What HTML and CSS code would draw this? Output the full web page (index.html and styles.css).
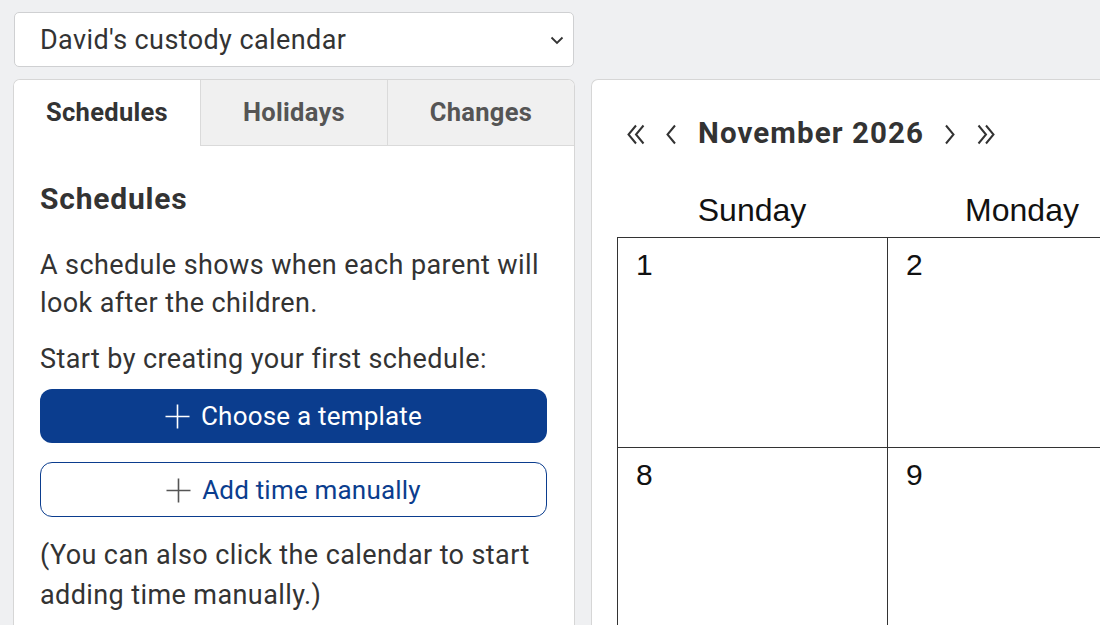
FILE: index.html
```html
<!DOCTYPE html>
<html>
<head>
<meta charset="utf-8">
<link rel="stylesheet" href="styles.css">
</head>
<body>
<div class="page">
  <div class="left">
    <div class="select">
      <span>David's custody calendar</span>
      <svg class="chev" width="14" height="9" viewBox="0 0 14 9"><path d="M1.5 1.5 L7 7 L12.5 1.5" fill="none" stroke="#333" stroke-width="1.8"/></svg>
    </div>
    <div class="panel">
      <div class="tabs">
        <div class="tab active">Schedules</div>
        <div class="tab">Holidays</div>
        <div class="tab">Changes</div>
      </div>
      <div class="content">
        <h2 class="heading">Schedules</h2>
        <p class="para">A schedule shows when each parent will look after the children.</p>
        <p class="para start">Start by creating your first schedule:</p>
        <div class="btn primary"><svg class="plus" width="25" height="25" viewBox="0 0 25 25"><path d="M12.5 0.5 V24.5 M0.5 12.5 H24.5" stroke="currentColor" stroke-width="1.6"/></svg>Choose a template</div>
        <div class="btn outline"><svg class="plus" width="25" height="25" viewBox="0 0 25 25"><path d="M12.5 0.5 V24.5 M0.5 12.5 H24.5" stroke="#555" stroke-width="1.6"/></svg>Add time manually</div>
        <p class="para note">(You can also click the calendar to start adding time manually.)</p>
      </div>
    </div>
  </div>
  <div class="right">
    <div class="nav">
      <svg class="arrow first" width="20" height="21" viewBox="0 0 20 21"><path d="M10 1.5 L2.5 10.5 L10 19.5 M17.5 1.5 L10 10.5 L17.5 19.5" fill="none" stroke="#333" stroke-width="2"/></svg>
      <svg class="arrow prev" width="12" height="21" viewBox="0 0 12 21"><path d="M10 1.5 L2.5 10.5 L10 19.5" fill="none" stroke="#333" stroke-width="2"/></svg>
      <span class="month">November 2026</span>
      <svg class="arrow next" width="12" height="21" viewBox="0 0 12 21"><path d="M2 1.5 L9.5 10.5 L2 19.5" fill="none" stroke="#333" stroke-width="2"/></svg>
      <svg class="arrow last" width="20" height="21" viewBox="0 0 20 21"><path d="M2.5 1.5 L10 10.5 L2.5 19.5 M10 1.5 L17.5 10.5 L10 19.5" fill="none" stroke="#333" stroke-width="2"/></svg>
    </div>
    <div class="days">
      <div class="dayname">Sunday</div>
      <div class="dayname">Monday</div>
    </div>
    <div class="grid">
      <div class="cell">1</div>
      <div class="cell">2</div>
      <div class="cell">8</div>
      <div class="cell">9</div>
    </div>
  </div>
</div>
</body>
</html>
```

FILE: styles.css
```css
html, body {
  margin: 0;
  padding: 0;
  background: #eff0f2;
  height: 100%;
  overflow: hidden;
}
body {
  font-family: Roboto, "Liberation Sans", sans-serif;
  color: #333;
}
.page {
  display: flex;
  gap: 17px;
  padding: 12px 0 0 14px;
  align-items: flex-start;
}
.left {
  width: 560px;
  flex: none;
}
.select {
  height: 53px;
  background: #fff;
  border: 1px solid #cfd0d2;
  border-radius: 5px;
  display: flex;
  align-items: center;
  justify-content: space-between;
  padding: 0 9px 0 25px;
  font-size: 27px;
  letter-spacing: 0.4px;
  color: #333;
}
.chev { margin-top: 2px; }
.panel {
  margin-top: 12px;
  margin-left: -1px;
  margin-right: -1px;
  background: #fff;
  border: 1px solid #d6d6d6;
  border-bottom: none;
  border-radius: 7px 7px 0 0;
  height: 545px;
  overflow: hidden;
}
.tabs {
  display: flex;
  height: 66px;
}
.tab {
  flex: 1;
  display: flex;
  align-items: center;
  justify-content: center;
  font-weight: 700;
  font-size: 25.5px;
  letter-spacing: 0.3px;
  color: #555;
  background: #f0f0f0;
  border-left: 1px solid #dadada;
  border-bottom: 1px solid #dadada;
  padding-bottom: 2px;
}
.tab.active {
  background: #fff;
  color: #333;
  border-left: none;
  border-bottom: none;
}
.content {
  padding: 0 27px 0 26px;
}
.heading {
  margin: 0;
  padding-top: 35px;
  font-size: 30px;
  letter-spacing: 0.8px;
  font-weight: 700;
  line-height: 36px;
  color: #333;
}
.para {
  margin: 0;
  font-size: 27px;
  letter-spacing: 0.4px;
  line-height: 38px;
  color: #333;
}
.heading + .para { margin-top: 29px; }
.start { margin-top: 18px; }
.btn {
  height: 54px;
  box-sizing: border-box;
  border-radius: 12px;
  display: flex;
  align-items: center;
  justify-content: center;
  gap: 11px;
  font-size: 26px;
  letter-spacing: 0.2px;
}
.primary {
  margin-top: 11px;
  background: #0b3d8e;
  color: #fff;
}
.outline {
  margin-top: 19px;
  border: 1px solid #0b3d8e;
  color: #0b3d8e;
  background: #fff;
  height: 55px;
}
.plus { margin-top: 1px; }
.note { margin-top: 18px; line-height: 40px; }

.right {
  flex: none;
  width: 600px;
  height: 545px;
  margin-top: 67px;
  background: #fff;
  border: 1px solid #d6d6d6;
  border-right: none;
  border-bottom: none;
  border-radius: 7px 0 0 0;
  padding-left: 25px;
  overflow: hidden;
}
.nav {
  display: flex;
  align-items: center;
  height: 36px;
  margin-top: 35px;
  padding-left: 9px;
}
.arrow {
  flex: none;
  margin-top: 3px;
}
.first { margin-right: 19px; }
.prev { margin-right: 21px; }
.next { margin-left: 20px; margin-right: 20px; }
.month {
  font-size: 29.5px;
  letter-spacing: 1.1px;
  font-weight: 700;
  color: #333;
}
.days {
  display: grid;
  grid-template-columns: 270px 270px;
  margin-top: 36px;
  height: 50px;
}
.dayname {
  font-family: "Liberation Sans", Arial, sans-serif;
  font-size: 32px;
  color: #111;
  text-align: center;
  line-height: 47px;
  padding-bottom: 3px;
}
.grid {
  display: grid;
  grid-template-columns: 270px 270px;
  grid-auto-rows: 210px;
  border-top: 1px solid #333;
  border-left: 1px solid #333;
}
.cell {
  border-right: 1px solid #333;
  border-bottom: 1px solid #333;
  font-family: "Liberation Sans", Arial, sans-serif;
  font-size: 30px;
  color: #111;
  padding: 10px 0 0 18px;
}
```
